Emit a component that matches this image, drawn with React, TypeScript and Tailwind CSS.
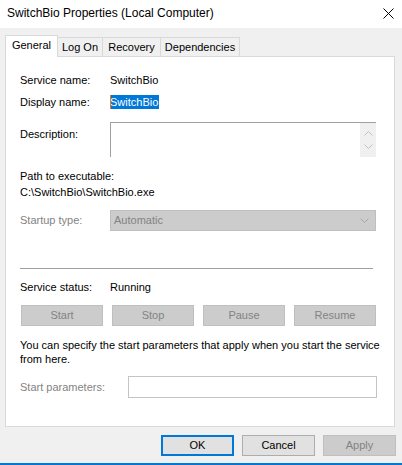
const tabs = [
  { label: 'General', w: 'w-[53px]', active: true },
  { label: 'Log On', w: 'w-[45px]', active: false },
  { label: 'Recovery', w: 'w-[58px]', active: false },
  { label: 'Dependencies', w: 'w-[79px]', active: false },
]

const controlButtons = ['Start', 'Stop', 'Pause', 'Resume']

const Chevron = ({ up = false, color = '#a6a6a6' }: { up?: boolean; color?: string }) => (
  <svg width="9" height="5" viewBox="0 0 9 5" className="block">
    <path d={up ? 'M0.5 4.5 L4.5 0.5 L8.5 4.5' : 'M0.5 0.5 L4.5 4.5 L8.5 0.5'} fill="none" stroke={color} strokeWidth="1" />
  </svg>
)

const App = () => {
  return (
    <div className="w-[402px] h-[465px] bg-[#f0f0f0] flex flex-col overflow-hidden font-['Liberation_Sans',Arial,sans-serif] text-[11px] leading-[13px] text-black">
      {/* title bar */}
      <div className="h-[28px] shrink-0 bg-white flex items-center justify-between pl-[7px] pr-[8px]">
        <span className="font-['Liberation_Sans',Arial,sans-serif] text-[12px] leading-[16px] -mt-[2px]">SwitchBio Properties (Local Computer)</span>
        <svg width="11" height="11" viewBox="0 0 11 11" className="-mt-[2px]">
          <path d="M0.5 0.5 L10.5 10.5 M10.5 0.5 L0.5 10.5" stroke="#000" strokeWidth="1" fill="none" />
        </svg>
      </div>

      {/* tabs */}
      <div className="mt-[7px] ml-[5px] flex items-end h-[21px]">
        {tabs.map((t) =>
          t.active ? (
            <div
              key={t.label}
              className={`${t.w} h-[22px] -mb-px relative z-10 bg-white border border-b-0 border-[#d9d9d9] flex items-center justify-center pb-[2px]`}
            >
              {t.label}
            </div>
          ) : (
            <div
              key={t.label}
              className={`${t.w} h-[19px] bg-[#f0f0f0] border-t border-r border-[#d9d9d9] flex items-center justify-center`}
            >
              {t.label}
            </div>
          )
        )}
      </div>

      {/* panel */}
      <div className="ml-[5px] w-[390px] h-[371px] shrink-0 bg-white border border-[#d9d9d9] pl-[14px] pr-[17px]">
        <div className="mt-[17px] flex items-center h-[13px]">
          <span className="w-[90px]">Service name:</span>
          <span>SwitchBio</span>
        </div>

        <div className="mt-[8px] flex items-center h-[14px]">
          <span className="w-[90px]">Display name:</span>
          <span className="relative bg-[#0078d7] text-white h-[14px] flex items-center pr-[1px]">
            <span className="absolute left-0 top-0 h-[14px] w-px bg-[#e8781e]" />
            SwitchBio
          </span>
        </div>

        <div className="mt-[13px] flex items-start h-[35px]">
          <span className="w-[90px] mt-[6px]">Description:</span>
          <div className="w-[266px] h-[35px] border-t border-l border-[#a0a0a0] flex justify-end">
            <div className="w-[16px] h-[34px] bg-[#f0f0f0] flex flex-col items-center justify-between py-[8px]">
              <Chevron up color="#c2c2c2" />
              <Chevron color="#c2c2c2" />
            </div>
          </div>
        </div>

        <div className="mt-[13px]">Path to executable:</div>
        <div className="mt-[3px]">C:\SwitchBio\SwitchBio.exe</div>

        <div className="mt-[11px] flex items-center h-[21px]">
          <span className="w-[90px] text-[#838383]">Startup type:</span>
          <div className="w-[266px] h-[21px] bg-[#cccccc] border border-[#bfbfbf] flex items-center justify-between pl-[3px] pr-[6px] text-[#838383]">
            <span>Automatic</span>
            <Chevron color="#a8a8a8" />
          </div>
        </div>

        <div className="mt-[37px] w-[353px] h-px bg-[#a0a0a0]" />

        <div className="mt-[12px] flex items-center h-[13px]">
          <span className="w-[90px]">Service status:</span>
          <span>Running</span>
        </div>

        <div className="mt-[11px] ml-[1px] w-[355px] flex justify-between">
          {controlButtons.map((b) => (
            <div
              key={b}
              className="w-[82px] h-[21px] bg-[#cccccc] border border-[#bfbfbf] text-[#838383] flex items-center justify-center"
            >
              {b}
            </div>
          ))}
        </div>

        <p className="mt-[12px] leading-[14px] w-[360px]">
          You can specify the start parameters that apply when you start the service from here.
        </p>

        <div className="mt-[10px] flex items-center h-[22px]">
          <span className="w-[108px] text-[#838383]">Start parameters:</span>
          <div className="w-[249px] h-[22px] bg-white border border-[#c4c4c4]" />
        </div>
      </div>

      {/* dialog buttons */}
      <div className="mt-[8px] pr-[6px] flex justify-end gap-[8px]">
        <div className="w-[73px] h-[21px] bg-[#e1e1e1] border-2 border-[#0078d7] flex items-center justify-center">OK</div>
        <div className="w-[73px] h-[21px] bg-[#e1e1e1] border border-[#adadad] flex items-center justify-center">Cancel</div>
        <div className="w-[73px] h-[21px] bg-[#cccccc] border border-[#bfbfbf] text-[#838383] flex items-center justify-center">Apply</div>
      </div>

      <div className="mt-auto h-[2px] shrink-0 bg-[#0078d7]" />
    </div>
  )
}

export default App
